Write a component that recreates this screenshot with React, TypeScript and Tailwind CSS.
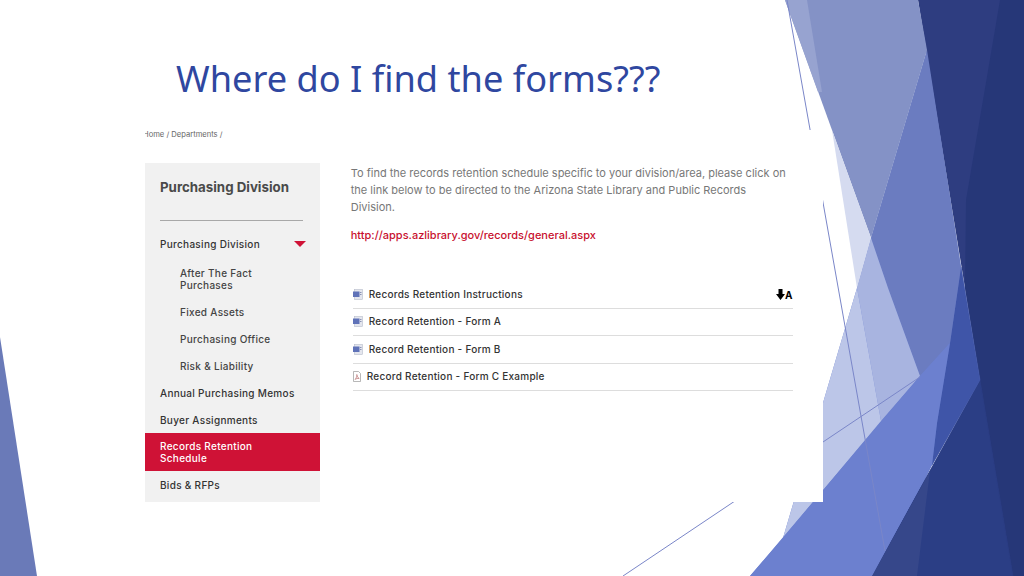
const menuItems = [
  { label: "After The Fact\nPurchases", sub: true },
  { label: "Fixed Assets", sub: true },
  { label: "Purchasing Office", sub: true },
  { label: "Risk & Liability", sub: true },
  { label: "Annual Purchasing Memos" },
  { label: "Buyer Assignments", last: true },
  { label: "Records Retention\nSchedule", active: true },
  { label: "Bids & RFPs", end: true },
];

const files = [
  { name: "Records Retention Instructions", pdf: false, download: true },
  { name: "Record Retention - Form A", pdf: false },
  { name: "Record Retention - Form B", pdf: false },
  { name: "Record Retention - Form C Example", pdf: true },
];

function Backdrop() {
  return (
    <svg className="absolute inset-0" width="1024" height="576" viewBox="0 0 1024 576">
      <polygon points="0,337 37,576 0,576" fill="#6a7ab8" />
      <polygon points="871,238 927,50 961,267 980,380 932,465 880,576 750,576 783,538 857,288" fill="#6c80cf" />
      <polygon points="918,0 1024,0 1024,576 872,576 980,380" fill="#2e3d80" />
      <polygon points="1000,0 1024,0 1024,576 1013,576 980,380 965,288 966,200" fill="#263778" />
      <polygon points="872,576 980,380 1013,576" fill="#2b3e85" stroke="#2b3e85" strokeWidth="0.6" />
      <polygon points="872,576 917,576 930,471" fill="#36478a" />
      <polygon points="961,267 980,380 932,465 937,423 950,343 958,288" fill="#3f55a8" stroke="#3f55a8" strokeWidth="0.6" />
      <polygon points="927,50 871,238 888,288 920,376 950,343 958,288 961,267" fill="#6b7cc0" />
      <polygon points="785,0 918,0 927,50 871,238" fill="#8492c6" />
      <polygon points="785,0 807,0 822,92 818,92" fill="#97a3d0" />
      <polygon points="832,130 871,238 857,288" fill="#d5dbf0" />
      <polygon points="871,238 888,288 920,376 881,421 857,288" fill="#a8b4e0" />
      <polygon points="857,288 881,421 783,538" fill="#bcc6e8" />
      <polygon points="950,343 920,376 750,576 872,576 932,465 937,423" fill="#6c80cf" />
      <line x1="787" y1="0" x2="885" y2="551" stroke="#7a86c8" strokeWidth="1" />
      <line x1="623" y1="576" x2="920" y2="377" stroke="#7a86c8" strokeWidth="1" />
    </svg>
  );
}

function FileIcon({ pdf }: { pdf: boolean }) {
  if (pdf) {
    return (
      <svg width="8" height="11" viewBox="0 0 8 11" className="shrink-0">
        <path d="M0.5 0.5H5.5L7.5 2.5V10.5H0.5Z" fill="#fff" stroke="#999" strokeWidth="0.7" />
        <path d="M2 8.5C3.5 7 4 5 3.8 3.5C4.2 5.5 5 7 6.2 7.5C4.5 7.3 3 7.7 2 8.5Z" fill="none" stroke="#b06060" strokeWidth="0.6" />
      </svg>
    );
  }
  return (
    <svg width="10" height="11" viewBox="0 0 10 11" className="shrink-0">
      <rect x="1.5" y="0.5" width="8" height="10" fill="#e4e6ee" stroke="#b8bccb" strokeWidth="0.6" />
      <rect x="0" y="2.5" width="6.5" height="5.5" fill="#5f72b8" />
      <rect x="7" y="3" width="1.5" height="1" fill="#8a93b5" />
      <rect x="7" y="5" width="1.5" height="1" fill="#8a93b5" />
    </svg>
  );
}

export default function App() {
  return (
    <div className="relative w-[1024px] h-[576px] overflow-hidden bg-white flex flex-col font-['Inter',sans-serif]">
      <Backdrop />

      <h1 className="relative h-[130px] pl-[176px] pt-[53px] text-[36.2px] leading-[50px] font-normal text-[#2f47a0] font-['Noto_Sans',sans-serif]">
        Where do I find the forms???
      </h1>

      <div className="relative ml-[145px] w-[678px] h-[372px] bg-white flex flex-col">
        <div className="h-[33px] pt-[1px] text-[7.6px] leading-[8px] text-[#666] overflow-hidden">
          <p className="ml-[-2px]">Home / Departments /</p>
        </div>

        <div className="flex h-[339px]">
          <aside className="w-[175px] bg-[#f1f1f1] flex flex-col pt-[16px] text-[10px] leading-[12px] font-medium tracking-[0.3px] text-[#333]">
            <h2 className="px-[15px] text-[13.3px] leading-[16px] font-bold tracking-normal text-[#4a4a4a]">Purchasing Division</h2>
            <div className="ml-[15px] mr-[17px] mt-[25px] h-px bg-[#a8a8a8]" />
            <div className="flex items-center justify-between pl-[15px] pr-[14px] pt-[17px] pb-[10px]">
              <span>Purchasing Division</span>
              <svg width="12" height="6" viewBox="0 0 12 6">
                <polygon points="0,0 12,0 6,6" fill="#cf1236" />
              </svg>
            </div>
            {menuItems.map((item) => (
              <div
                key={item.label}
                className={
                  item.active
                    ? "px-[15px] py-[7px] whitespace-pre-line bg-[#cf1236] text-white"
                    : item.sub
                      ? "pl-[35px] pr-[15px] py-[7px] mb-[1px] whitespace-pre-line text-[#444]"
                      : item.last
                        ? "px-[15px] py-[7px] whitespace-pre-line"
                        : item.end
                          ? "px-[15px] pt-[8px] whitespace-pre-line"
                          : "px-[15px] py-[7px] mb-[1px] whitespace-pre-line"
                }
              >
                {item.label}
              </div>
            ))}
          </aside>

          <main className="w-[473px] ml-[31px] pt-[2px] text-[11px] text-[#777]">
            <p className="w-[442px] leading-[17px]">
              To find the records retention schedule specific to your division/area, please click on the link below
              to be directed to the Arizona State Library and Public Records Division.
            </p>
            <p className="mt-[11px] leading-[17px] text-[#c8102e] font-medium">http://apps.azlibrary.gov/records/general.aspx</p>

            <ul className="mt-[37px] ml-[2px] w-[440px] text-[10px] tracking-[0.25px] text-[#333] font-medium">
              {files.map((file) => (
                <li key={file.name} className="h-[27.5px] flex items-center gap-[6px] border-b border-[#dddddd]">
                  <FileIcon pdf={file.pdf} />
                  <span className="flex-1">{file.name}</span>
                  {file.download && (
                    <span className="flex items-center text-black">
                      <svg width="9" height="11" viewBox="0 0 9 11">
                        <path d="M2.5 0H6.5V5H9L4.5 11L0 5H2.5Z" fill="#000" />
                      </svg>
                      <span className="text-[10px] leading-[9px] font-bold mt-[3px]">A</span>
                    </span>
                  )}
                </li>
              ))}
            </ul>
          </main>
        </div>
      </div>
    </div>
  );
}
